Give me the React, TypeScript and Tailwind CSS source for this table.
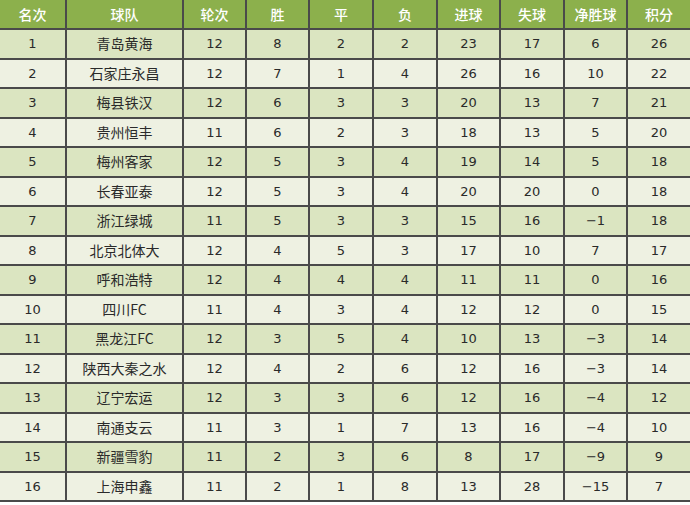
const headers = ["名次", "球队", "轮次", "胜", "平", "负", "进球", "失球", "净胜球", "积分"];
const widths = ["w-[66px]", "w-[117px]", "w-[63px]", "w-[63px]", "w-[64px]", "w-[64px]", "w-[63px]", "w-[64px]", "w-[63px]", "w-[63px]"];

const rows: (string | number)[][] = [
  [1, "青岛黄海", 12, 8, 2, 2, 23, 17, 6, 26],
  [2, "石家庄永昌", 12, 7, 1, 4, 26, 16, 10, 22],
  [3, "梅县铁汉", 12, 6, 3, 3, 20, 13, 7, 21],
  [4, "贵州恒丰", 11, 6, 2, 3, 18, 13, 5, 20],
  [5, "梅州客家", 12, 5, 3, 4, 19, 14, 5, 18],
  [6, "长春亚泰", 12, 5, 3, 4, 20, 20, 0, 18],
  [7, "浙江绿城", 11, 5, 3, 3, 15, 16, "−1", 18],
  [8, "北京北体大", 12, 4, 5, 3, 17, 10, 7, 17],
  [9, "呼和浩特", 12, 4, 4, 4, 11, 11, 0, 16],
  [10, "四川FC", 11, 4, 3, 4, 12, 12, 0, 15],
  [11, "黑龙江FC", 12, 3, 5, 4, 10, 13, "−3", 14],
  [12, "陕西大秦之水", 12, 4, 2, 6, 12, 16, "−3", 14],
  [13, "辽宁宏运", 12, 3, 3, 6, 12, 16, "−4", 12],
  [14, "南通支云", 11, 3, 1, 7, 13, 16, "−4", 10],
  [15, "新疆雪豹", 11, 2, 3, 6, 8, 17, "−9", 9],
  [16, "上海申鑫", 11, 2, 1, 8, 13, 28, "−15", 7],
];

export default function App() {
  return (
    <div className="w-[690px] h-[505px] bg-white overflow-hidden font-['DejaVu_Sans','Noto_Sans_CJK_SC',sans-serif]">
      <table className="table-fixed border-collapse w-[690px] text-[13px] text-[#2a2a2a]">
        <colgroup>
          {widths.map((w, i) => (
            <col key={i} className={w} />
          ))}
        </colgroup>
        <thead>
          <tr className="h-[29px] bg-[#8cb04c]">
            {headers.map((h, i) => (
              <th
                key={h}
                className={`border-b-2 border-[#4a4a4a] font-medium text-white text-[14px] font-['Noto_Sans_CJK_SC',sans-serif] ${
                  i < headers.length - 1 ? "border-r-2" : ""
                }`}
              >
                {h}
              </th>
            ))}
          </tr>
        </thead>
        <tbody>
          {rows.map((r, ri) => (
            <tr key={ri} className={`h-[29.5px] ${ri % 2 === 0 ? "bg-[#dbe5c1]" : "bg-[#eef1e2]"}`}>
              {r.map((c, ci) => (
                <td
                  key={ci}
                  className={`border-b-2 border-[#4a4a4a] text-center p-0 ${ci < r.length - 1 ? "border-r-2" : ""} ${
                    ci === 1 ? "font-['Noto_Sans_CJK_SC',sans-serif] text-[14px]" : ""
                  }`}
                >
                  {c}
                </td>
              ))}
            </tr>
          ))}
        </tbody>
      </table>
    </div>
  );
}
